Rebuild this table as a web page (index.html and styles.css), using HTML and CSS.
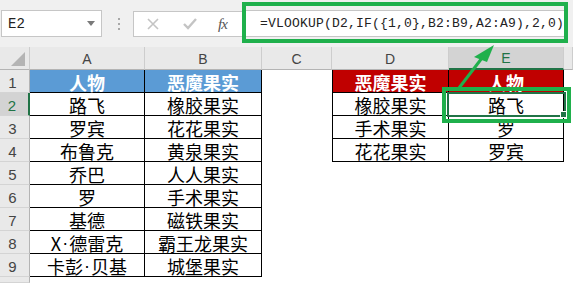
FILE: index.html
```html
<!DOCTYPE html>
<html lang="zh-CN">
<head>
    <meta charset="UTF-8">
    <meta name="viewport" content="width=device-width, initial-scale=1.0">
    <title>VLOOKUP 反向查找</title>
    <link rel="stylesheet" href="styles.css">
</head>
<body>
    <div class="toolbar">
        <div class="name-box">
            <span>E2</span>
            <span class="drop"></span>
        </div>
        <div class="grip"><i></i><i></i><i></i></div>
        <div class="fx-buttons">
            <svg class="btn-cancel" width="14" height="14" viewBox="0 0 14 14">
                <path d="M2 2 L12 12 M12 2 L2 12" stroke="#c4c4c4" stroke-width="1.6" fill="none"/>
            </svg>
            <svg class="btn-enter" width="16" height="14" viewBox="0 0 16 14">
                <path d="M2 7 L6 11 L14 2" stroke="#c4c4c4" stroke-width="2.4" fill="none"/>
            </svg>
            <span class="btn-fx">fx</span>
        </div>
        <div class="formula">
            <div class="formula-input">=VLOOKUP(D2,IF({1,0},B2:B9,A2:A9),2,0)</div>
        </div>
    </div>

    <div class="sheet">
        <div class="corner"><span class="corner-mark"></span></div>
        <div class="col-head">A</div>
        <div class="col-head">B</div>
        <div class="col-head">C</div>
        <div class="col-head">D</div>
        <div class="col-head selected">E</div>
        <div class="col-head"></div>

        <div class="row-head">1</div>
        <div class="cell t th blue">人物</div>
        <div class="cell t th blue">恶魔果实</div>
        <div class="cell"></div>
        <div class="cell t l th red">恶魔果实</div>
        <div class="cell t th red">人物</div>
        <div class="cell"></div>

        <div class="row-head selected">2</div>
        <div class="cell t">路飞</div>
        <div class="cell t">橡胶果实</div>
        <div class="cell"></div>
        <div class="cell t l">橡胶果实</div>
        <div class="cell t active">路飞<span class="mark"></span></div>
        <div class="cell"></div>

        <div class="row-head">3</div>
        <div class="cell t">罗宾</div>
        <div class="cell t">花花果实</div>
        <div class="cell"></div>
        <div class="cell t l">手术果实</div>
        <div class="cell t">罗</div>
        <div class="cell"></div>

        <div class="row-head">4</div>
        <div class="cell t">布鲁克</div>
        <div class="cell t">黄泉果实</div>
        <div class="cell"></div>
        <div class="cell t l">花花果实</div>
        <div class="cell t">罗宾</div>
        <div class="cell"></div>

        <div class="row-head">5</div>
        <div class="cell t">乔巴</div>
        <div class="cell t">人人果实</div>
        <div class="cell"></div>
        <div class="cell"></div>
        <div class="cell"></div>
        <div class="cell"></div>

        <div class="row-head">6</div>
        <div class="cell t">罗</div>
        <div class="cell t">手术果实</div>
        <div class="cell"></div>
        <div class="cell"></div>
        <div class="cell"></div>
        <div class="cell"></div>

        <div class="row-head">7</div>
        <div class="cell t">基德</div>
        <div class="cell t">磁铁果实</div>
        <div class="cell"></div>
        <div class="cell"></div>
        <div class="cell"></div>
        <div class="cell"></div>

        <div class="row-head">8</div>
        <div class="cell t">X<span class="dot">·</span>德雷克</div>
        <div class="cell t">霸王龙果实</div>
        <div class="cell"></div>
        <div class="cell"></div>
        <div class="cell"></div>
        <div class="cell"></div>

        <div class="row-head">9</div>
        <div class="cell t">卡彭<span class="dot">·</span>贝基</div>
        <div class="cell t">城堡果实</div>
        <div class="cell"></div>
        <div class="cell"></div>
        <div class="cell"></div>
        <div class="cell"></div>

        <div class="row-head"></div>
        <div class="cell"></div>
        <div class="cell"></div>
        <div class="cell"></div>
        <div class="cell"></div>
        <div class="cell"></div>
        <div class="cell"></div>
    </div>

    <!-- pointer from the result cell up to the formula -->
    <svg class="pointer" width="573" height="283" viewBox="0 0 573 283">
        <line x1="459" y1="88" x2="482" y2="58" stroke="#1fb04c" stroke-width="3"/>
        <polygon points="494,45 474,57 487,62" fill="#1fb04c"/>
    </svg>
</body>
</html>
```

FILE: styles.css
```css
* {
    box-sizing: border-box;
    margin: 0;
    padding: 0;
}

body {
    width: 573px;
    height: 283px;
    overflow: hidden;
    position: relative;
    background-color: #fff;
    font-family: "Noto Sans CJK SC", sans-serif;
}

/* formula bar */
.toolbar {
    height: 47px;
    background-color: #f0f0f0;
    display: flex;
    align-items: flex-start;
}

.name-box {
    margin: 10px 0 0 1px;
    width: 101px;
    height: 27px;
    border: 1px solid #c6c6c6;
    background-color: #fff;
    display: flex;
    align-items: center;
    padding-left: 6px;
    font: 14px "Liberation Mono", monospace;
    color: #222;
}

.drop {
    margin-left: auto;
    margin-right: 6px;
    border-left: 4px solid transparent;
    border-right: 4px solid transparent;
    border-top: 5px solid #7a7a7a;
}

.grip {
    margin: 18px 0 0 16px;
    display: flex;
    flex-direction: column;
    gap: 3px;
}

.grip i {
    width: 2px;
    height: 2px;
    background-color: #a8a8a8;
}

.fx-buttons {
    margin: 11px 0 0 13px;
    width: 109px;
    height: 26px;
    border: 1px solid #c6c6c6;
    border-right: none;
    background-color: #fff;
    display: flex;
    align-items: center;
    padding-left: 12px;
}

.btn-enter {
    margin-left: 22px;
}

.btn-fx {
    margin-left: 20px;
    font: italic 15px "Liberation Serif", serif;
    color: #555;
    letter-spacing: -1px;
}

.formula {
    margin-top: 2px;
    width: 326px;
    height: 41px;
    border: 4px solid #1fb04c;
    padding: 4px 0 2px 0;
}

.formula-input {
    height: 27px;
    border-top: 1px solid #c6c6c6;
    border-bottom: 1px solid #c6c6c6;
    background-color: #fff;
    padding-left: 14px;
    font: 13px "Liberation Mono", monospace;
    letter-spacing: 0.2px;
    line-height: 25px;
    color: #222;
    white-space: nowrap;
}

/* worksheet grid */
.sheet {
    display: grid;
    grid-template-columns: 30px 115px 117px 70px 117px 115px 1fr;
    grid-template-rows: repeat(10, 23px) 6px;
}

.corner,
.col-head,
.row-head {
    background-color: #e9e9e9;
    border-right: 1px solid #cdcdcd;
    border-bottom: 1px solid #b4b4b4;
    color: #444;
    font: 14px "Liberation Sans", sans-serif;
    display: flex;
    align-items: center;
    justify-content: center;
}

.corner {
    align-items: flex-end;
    justify-content: flex-end;
    padding: 0 4px 3px 0;
}

.corner-mark {
    width: 0;
    height: 0;
    border-left: 14px solid transparent;
    border-bottom: 14px solid #b4b4b4;
}

.col-head {
    padding-top: 1px;
}

.row-head {
    border-bottom-color: #d4d4d4;
    border-right-color: #b4b4b4;
    padding: 2px 4px 0 0;
    font-size: 15px;
}

.col-head.selected {
    background-color: #d3d3d3;
    color: #217346;
    border-bottom: 2px solid #217346;
}

.row-head.selected {
    background-color: #d3d3d3;
    color: #217346;
    border-right: 2px solid #217346;
}

.cell {
    display: flex;
    align-items: flex-end;
    justify-content: center;
    font-size: 18px;
    line-height: 20px;
    color: #000;
    white-space: nowrap;
}

.dot {
    font-family: "Liberation Sans", sans-serif;
    padding: 0 1px;
}

/* bordered table cells */
.t {
    border-right: 1px solid #000;
    border-bottom: 1px solid #000;
}

.l {
    border-left: 1px solid #000;
}

.th {
    color: #fff;
    font-weight: bold;
}

.blue {
    background-color: #5b9bd5;
}

.red {
    background-color: #c00000;
}

/* selected cell */
.active {
    position: relative;
}

.active::after {
    content: "";
    position: absolute;
    top: -1px;
    left: -2px;
    right: -3px;
    bottom: -2px;
    border: 2px solid #217346;
}

.active::before {
    content: "";
    position: absolute;
    right: -4px;
    bottom: -3px;
    width: 5px;
    height: 5px;
    background-color: #217346;
    border: 1px solid #fff;
    z-index: 1;
}

.mark {
    position: absolute;
    top: -6px;
    left: -7px;
    right: -8px;
    bottom: -8px;
    border: 4px solid #1fb04c;
}

.pointer {
    position: absolute;
    top: 0;
    left: 0;
    pointer-events: none;
}
```
